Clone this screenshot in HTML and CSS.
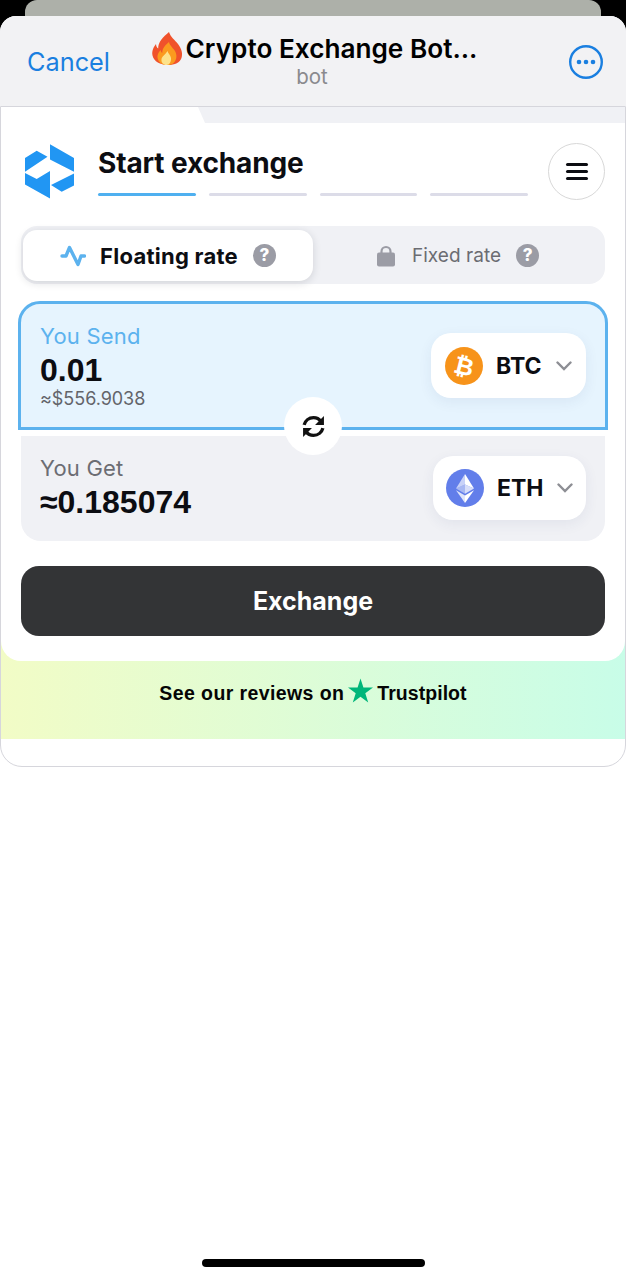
FILE: index.html
```html
<!DOCTYPE html>
<html lang="en">
<head>
<meta charset="utf-8">
<title>Crypto Exchange Bot</title>
<link rel="stylesheet" href="styles.css">
</head>
<body>
<div class="phone">
  <div class="back-sheet"></div>
  <div class="sheet">
    <header class="nav">
      <a class="cancel">Cancel</a>
      <div class="nav-title">
        <div class="nav-name">
          <svg class="flame" viewBox="0 0 33 33"><path fill="#f0522b" d="M18 0c1.500 5 6 8 9 12 3.500 5 5 9 3.500 14C29 30.500 24 33 17 33 9 33 3 29.500 1.500 23.500.6 19 2.500 15 5 12c.2 2 .8 3.500 2.200 4.500C7 10 12 5 18 0z"/><path fill="#fb9a1e" d="M18 10c.8 4 4.500 6 6.500 10 2 4.500.5 9-2 11-1.500 1.400-3.500 2-6 2-4 0-8-1.500-9.500-5.500C5.500 23.500 7.500 20.500 9.500 18c.3 1.300.8 2.300 1.800 3C11 17 14 13 18 10z"/><path fill="#fde28a" d="M16.500 19c.5 2.500 3 4 3.500 7 .4 3.500-1.500 7-4.500 7-3.200 0-5.500-2.500-5-6 .4-2.500 3.800-4.500 6-8z"/></svg>
          <span>Crypto Exchange Bot...</span>
        </div>
        <div class="nav-sub">bot</div>
      </div>
      <svg class="more" viewBox="0 0 36 36"><circle cx="18" cy="18" r="15.800" fill="none" stroke="#1a7fe0" stroke-width="2.400"/><circle cx="11" cy="18" r="2.300" fill="#1a7fe0"/><circle cx="18" cy="18" r="2.300" fill="#1a7fe0"/><circle cx="25" cy="18" r="2.300" fill="#1a7fe0"/></svg>
    </header>

    <section class="widget">
      <div class="tab-strip"><div class="tab-white"></div></div>
      <div class="main">
        <div class="head">
          <svg class="logo" viewBox="0 0 52 56"><path fill="#2196f3" d="M26 1.200 50 15V28.800L37.700 22.500 26 16.500zM1 15 12.700 7.700 23.500 13.800 1 28.800zM1 30 12.700 36 26 28V55.500L1 41.500zM50 30.500V42.500L37.700 48.800 27 42z"/></svg>
          <div class="head-mid">
            <h1 class="title">Start exchange</h1>
            <div class="steps"><i class="step on"></i><i class="step"></i><i class="step"></i><i class="step"></i></div>
          </div>
          <button class="menu"><span></span><span></span><span></span></button>
        </div>

        <div class="rates">
          <div class="rate active">
            <svg class="rate-ic" viewBox="0 0 26 22"><path d="M2 11H6L9.500 2.500 18 19.500 21 11H24.500" fill="none" stroke="#5cb2ee" stroke-width="3.400" stroke-linecap="round" stroke-linejoin="round"/></svg>
            <span>Floating rate</span>
            <span class="q">?</span>
          </div>
          <div class="rate">
            <svg class="lock" viewBox="0 0 18 22"><path d="M4.500 9V6.500a4.500 4.500 0 0 1 9 0V9" fill="none" stroke="#9b9ca5" stroke-width="2.200"/><rect y="7.500" width="18" height="14" rx="2" fill="#9b9ca5"/></svg>
            <span>Fixed rate</span>
            <span class="q">?</span>
          </div>
        </div>

        <div class="exchange">
          <div class="box send">
            <div class="amounts">
              <div class="label">You Send</div>
              <div class="value">0.01</div>
              <div class="usd">≈$556.9038</div>
            </div>
            <div class="coin">
              <svg class="coin-ic" viewBox="0 0 38 38"><circle cx="19" cy="19" r="19" fill="#f7931a"/><text class="btc-glyph" x="19" y="27.500" text-anchor="middle" transform="rotate(14 19 19)">₿</text></svg>
              <span class="sym">BTC</span>
              <svg class="chev" viewBox="0 0 16 10"><path d="M1.500 1.500 8 8l6.500-6.500" fill="none" stroke="#8d8e94" stroke-width="2.400" stroke-linecap="round"/></svg>
            </div>
          </div>
          <div class="swap">
            <svg viewBox="0 0 24 24"><path d="M3 10.500C4 6.500 7.500 3.500 12 3.500c3 0 5.500 1.300 7 3.500" fill="none" stroke="#111" stroke-width="3.200"/><path d="M22 2v8.500H13.500z" fill="#111"/><path d="M21 13.500c-1 4-4.500 7-9 7-3 0-5.500-1.300-7-3.500" fill="none" stroke="#111" stroke-width="3.200"/><path d="M2 22V13.500H10.500z" fill="#111"/></svg>
          </div>
          <div class="box get">
            <div class="amounts">
              <div class="label">You Get</div>
              <div class="value">≈0.185074</div>
            </div>
            <div class="coin">
              <svg class="coin-ic" viewBox="0 0 38 38"><circle cx="19" cy="19" r="19" fill="#627eea"/><path fill="#fff" fill-opacity=".65" d="M19 5v10.500l-9 4z"/><path fill="#fff" d="M19 5l9 14.500-9-4z"/><path fill="#fff" fill-opacity=".45" d="M19 15.500l-9 4 9 5.300z"/><path fill="#fff" fill-opacity=".75" d="M19 15.500l9 4-9 5.300z"/><path fill="#fff" fill-opacity=".8" d="M10 21.300l9 12.700v-7.400z"/><path fill="#fff" d="M28 21.300 19 34v-7.400z"/></svg>
              <span class="sym">ETH</span>
              <svg class="chev" viewBox="0 0 16 10"><path d="M1.500 1.500 8 8l6.500-6.500" fill="none" stroke="#8d8e94" stroke-width="2.400" stroke-linecap="round"/></svg>
            </div>
          </div>
        </div>

        <button class="cta">Exchange</button>
      </div>

      <div class="reviews">
        <span class="see">See our reviews on</span>
        <svg class="star" viewBox="0 0 24 24"><path fill="#00b67a" d="M12 .5l2.800 8.700H24l-7.400 5.400 2.800 8.900L12 18l-7.400 5.500 2.800-8.900L0 9.200h9.200z"/></svg>
        <span class="brand">Trustpilot</span>
      </div>
    </section>
  </div>
  <div class="home"></div>
</div>
</body>
</html>
```

FILE: styles.css
```css
* { box-sizing: border-box; }
html, body { margin: 0; padding: 0; }
body { background: #000; font-family: Inter, "Liberation Sans", sans-serif; color: #0c0d12; }
h1 { margin: 0; }
button { border: 0; padding: 0; font: inherit; }

.phone { position: relative; width: 626px; height: 1280px; overflow: hidden; background: #000; }
.back-sheet { height: 16px; margin: 0 25px; background: #adb0a9; border-radius: 12px 12px 0 0; }
.sheet { height: 1264px; background: #fff; border-radius: 16px 16px 0 0; overflow: hidden; }

.nav { height: 90px; background: #f2f2f4; display: grid; grid-template-columns: 1fr auto 1fr; align-items: start; padding: 0 22px 0 27px; }
.cancel { font-size: 25.300px; line-height: 36px; color: #1a7fe0; margin-top: 28px; }
.nav-title { display: flex; flex-direction: column; align-items: center; margin: 15px 0 0 -3px; }
.nav-name { display: flex; align-items: center; gap: 2px; font-size: 26.200px; line-height: 36px; font-weight: 600; color: #000; white-space: nowrap; }
.flame { width: 33px; height: 33px; margin-top: -2px; }
.nav-sub { font-size: 20.500px; line-height: 24px; color: #8a8a8e; margin: -2px 4px 0 0; }
.more { width: 36px; height: 36px; justify-self: end; margin-top: 28px; }

.widget { height: 661px; background: #fff; border: 1px solid #d6d6dc; border-radius: 0 0 22px 22px; overflow: hidden; }
.tab-strip { height: 16px; background: #f0f1f5; }
.tab-white { width: 204px; height: 100%; background: #fff; clip-path: polygon(0 0, 197px 0, 204px 100%, 0 100%); }

.main { position: relative; z-index: 1; background: #fff; border-radius: 0 0 20px 20px; padding: 20px 20px 25px; height: 538px; }
.head { display: flex; align-items: flex-start; }
.logo { width: 52px; height: 56px; margin-left: 3px; flex: none; }
.head-mid { margin-left: 22px; width: 430px; }
.title { font-size: 28px; line-height: 40px; font-weight: 700; letter-spacing: -0.15px; white-space: nowrap; }
.steps { display: flex; gap: 13px; margin-top: 10px; }
.step { display: block; width: 98px; height: 3px; border-radius: 2px; background: #dcdce8; }
.step.on { background: #4fb0f0; }
.menu { flex: none; width: 57px; height: 57px; margin-left: 20px; border: 1px solid #d8d8d8; border-radius: 50%; background: #fff; display: flex; flex-direction: column; align-items: center; justify-content: center; gap: 4.500px; }
.menu span { display: block; width: 22px; height: 2.500px; border-radius: 2px; background: #0c0d12; }

.rates { display: flex; height: 58px; margin-top: 26px; padding: 4px 2px 3px; background: #f0f1f5; border-radius: 16px; }
.rate { flex: 1; display: flex; align-items: center; justify-content: center; font-size: 19px; color: #6b6c72; letter-spacing: .05px; }
.rate.active { flex: none; width: 290px; background: #fff; border-radius: 14px; box-shadow: 0 2px 8px rgba(20, 25, 45, .14); color: #0c0d12; font-weight: 700; font-size: 22px; letter-spacing: .25px; }
.rate-ic { width: 26px; height: 22px; margin-right: 14px; }
.lock { width: 18px; height: 22px; margin-right: 17px; }
.q { width: 23px; height: 23px; margin-left: 15px; border-radius: 50%; background: #9b9ca5; color: #fff; font-size: 17px; font-weight: 800; line-height: 23px; text-align: center; letter-spacing: 0; }

.exchange { position: relative; margin-top: 17px; }
.box { display: flex; align-items: center; justify-content: space-between; }
.send { margin: 0 -3px; height: 129px; padding: 0 19px; background: #e6f4fe; border: 3px solid #5cb2ee; border-radius: 22px 22px 0 0; }
.get { margin-top: 6px; height: 105px; padding: 0 19px; background: #f0f1f5; border-radius: 0 0 20px 20px; }
.get .amounts { margin-top: -4px; }
.label { font-size: 22px; line-height: 28px; color: #6c6d73; letter-spacing: .2px; }
.send .label { color: #5cb2ee; }
.value { font-family: "Liberation Sans", sans-serif; font-size: 32px; line-height: 38px; font-weight: 700; color: #0c0d12; margin: 1px 0 -1px; }
.usd { font-size: 18px; line-height: 22px; color: #63646a; letter-spacing: -.05px; }
.coin { display: flex; align-items: center; width: 155px; height: 65px; padding-left: 14px; background: #fff; border-radius: 20px; box-shadow: 0 4px 14px rgba(40, 60, 110, .07); }
.get .coin { width: 153px; height: 64px; padding-left: 13px; margin-top: -2px; }
.coin-ic { width: 38px; height: 38px; flex: none; }
.btc-glyph { font-family: "DejaVu Sans", sans-serif; font-size: 24px; font-weight: 700; fill: #fff; }
.sym { font-size: 23px; font-weight: 700; margin-left: 13px; width: 58px; }
.chev { width: 16px; height: 10px; margin-left: 2px; }
.swap { position: absolute; z-index: 2; left: 263px; top: 96px; width: 58px; height: 58px; border-radius: 50%; background: #fff; display: flex; align-items: center; justify-content: center; }
.swap svg { width: 25px; height: 25px; }

.cta { display: block; width: 100%; height: 70px; margin-top: 25px; background: #333436; color: #fff; border-radius: 18px; font-size: 25px; font-weight: 700; text-align: center; }

.reviews { height: 98px; margin-top: -20px; padding: 20px 0 14px; display: flex; align-items: center; justify-content: center; gap: 4px; background: linear-gradient(90deg, #f2fcc6, #c8fde8); font-family: "Liberation Sans", sans-serif; font-size: 19.500px; font-weight: 700; color: #050505; }
.see { letter-spacing: .4px; }
.star { width: 25px; height: 25px; margin-top: -5px; }
.brand { letter-spacing: .05px; }

.home { position: absolute; left: 202px; top: 1259px; width: 223px; height: 8px; border-radius: 4px; background: #000; }
```
